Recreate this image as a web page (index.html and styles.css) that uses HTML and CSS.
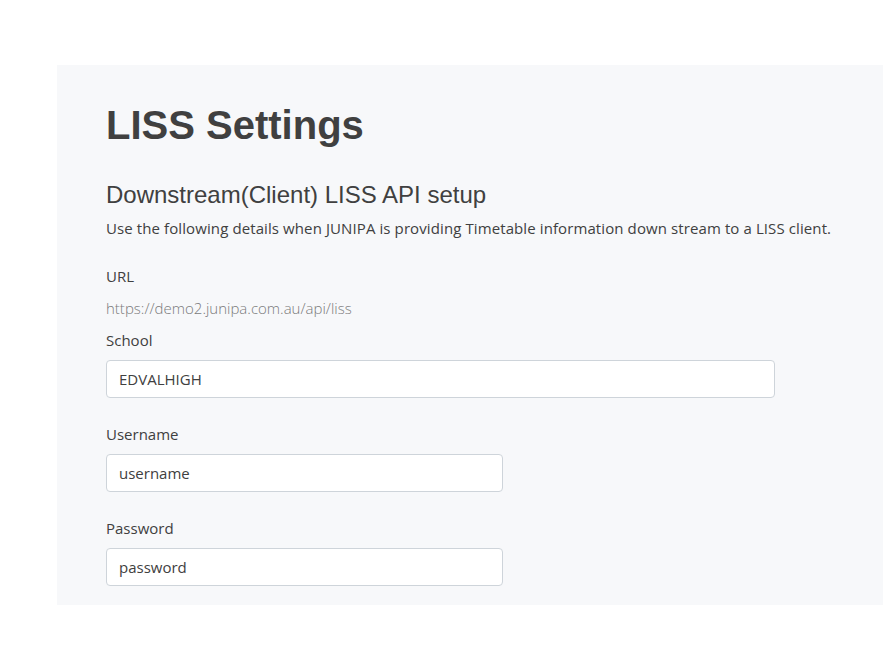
FILE: index.html
```html
<!DOCTYPE html>
<html lang="en">
<head>
<meta charset="utf-8">
<title>LISS Settings</title>
<link rel="stylesheet" href="styles.css">
</head>
<body>
<div class="page">
  <main class="panel">
    <h1 class="title">LISS Settings</h1>
    <h2 class="subtitle">Downstream(Client) LISS API setup</h2>
    <p class="intro">Use the following details when JUNIPA is providing Timetable information down stream to a LISS client.</p>
    <div class="field field-url">
      <div class="label">URL</div>
      <div class="static">https://demo2.junipa.com.au/api/liss</div>
    </div>
    <div class="field field-first">
      <label class="label" for="school">School</label>
      <input class="input input-wide" id="school" type="text" value="EDVALHIGH">
    </div>
    <div class="field">
      <label class="label" for="username">Username</label>
      <input class="input input-narrow" id="username" type="text" value="username">
    </div>
    <div class="field">
      <label class="label" for="password">Password</label>
      <input class="input input-narrow" id="password" type="text" value="password">
    </div>
  </main>
</div>
</body>
</html>
```
FILE: styles.css
```css
html, body {
  margin: 0;
  padding: 0;
  background: #ffffff;
}
body {
  font-family: "Open Sans", "Noto Sans", sans-serif;
  color: #404040;
}
.page {
  padding: 65px 0 0 57px;
}
.panel {
  width: 826px;
  box-sizing: border-box;
  background: #f7f8fa;
  padding: 36px 49px 19px;
  display: flex;
  flex-direction: column;
}
.title {
  margin: 0;
  font-family: "Liberation Sans", Arial, sans-serif;
  font-weight: 700;
  font-size: 40px;
  line-height: 48px;
  color: #404040;
}
.subtitle {
  margin: 31px 0 0;
  font-family: "Liberation Sans", Arial, sans-serif;
  font-weight: 400;
  font-size: 24px;
  line-height: 29px;
  color: #404040;
}
.intro {
  margin: 8px 0 0;
  font-size: 15px;
  line-height: 22px;
  letter-spacing: 0.1px;
}
.field {
  display: flex;
  flex-direction: column;
  align-items: flex-start;
  margin-top: 25px;
}
.field-url {
  margin-top: 26px;
}
.field-first {
  margin-top: 10px;
}
.label {
  font-size: 15px;
  line-height: 22px;
  color: #404040;
}
.static {
  margin-top: 10px;
  font-size: 15px;
  font-weight: 300;
  line-height: 22px;
  color: #7a7a7a;
}
.input {
  margin-top: 9px;
  box-sizing: border-box;
  height: 38px;
  padding: 7px 12px;
  font-family: "Open Sans", "Noto Sans", sans-serif;
  font-size: 15px;
  line-height: 22px;
  color: #404040;
  background: #ffffff;
  border: 1px solid #ced4da;
  border-radius: 4px;
  outline: none;
}
.input-wide {
  width: 669px;
}
.input-narrow {
  width: 397px;
}
```
